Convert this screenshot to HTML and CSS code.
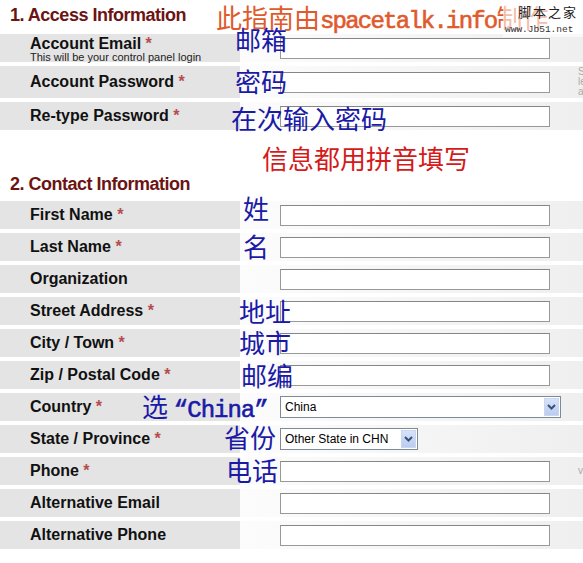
FILE: index.html
```html
<!DOCTYPE html>
<html lang="zh-CN">
<head>
    <meta charset="UTF-8">
    <meta name="viewport" content="width=device-width, initial-scale=1.0">
    <title>Signup - Access and Contact Information</title>
    <link rel="stylesheet" href="styles.css">
</head>
<body>
    <!-- watermark -->
    <div class="watermark">
        <div class="wm-name">脚本之家</div>
        <div class="wm-url">www.Jb51.net</div>
    </div>

    <!-- 1. Access -->
    <h2 class="section-title first">
        1. Access Information
        <span class="note note-orange">此指南由<span class="latin">spacetalk.info</span>制作</span>
    </h2>

    <div class="row row-email">
        <div class="label">
            <span>Account Email <span class="req">*</span></span>
            <small class="hint">This will be your control panel login</small>
        </div>
        <div class="field"><input type="text"></div>
        <span class="note n-email">邮箱</span>
    </div>
    <div class="row row-pass">
        <div class="label"><span>Account Password <span class="req">*</span></span></div>
        <div class="field">
            <input type="password">
            <div class="side">Six<br>letters<br>and</div>
        </div>
        <span class="note n-pass">密码</span>
    </div>
    <div class="row">
        <div class="label"><span>Re-type Password <span class="req">*</span></span></div>
        <div class="field"><input type="password"></div>
        <span class="note n-retype">在次输入密码</span>
    </div>

    <!-- 2. Contact -->
    <h2 class="section-title second">
        2. Contact Information
        <span class="note note-red">信息都用拼音填写</span>
    </h2>

    <div class="row">
        <div class="label"><span>First Name <span class="req">*</span></span></div>
        <div class="field"><input type="text"></div>
        <span class="note n-first">姓</span>
    </div>
    <div class="row">
        <div class="label"><span>Last Name <span class="req">*</span></span></div>
        <div class="field"><input type="text"></div>
        <span class="note n-last">名</span>
    </div>
    <div class="row">
        <div class="label"><span>Organization</span></div>
        <div class="field"><input type="text"></div>
    </div>
    <div class="row">
        <div class="label"><span>Street Address <span class="req">*</span></span></div>
        <div class="field"><input type="text"></div>
        <span class="note n-street">地址</span>
    </div>
    <div class="row">
        <div class="label"><span>City / Town <span class="req">*</span></span></div>
        <div class="field"><input type="text"></div>
        <span class="note n-city">城市</span>
    </div>
    <div class="row">
        <div class="label"><span>Zip / Postal Code <span class="req">*</span></span></div>
        <div class="field"><input type="text"></div>
        <span class="note n-zip">邮编</span>
    </div>
    <div class="row">
        <div class="label"><span>Country <span class="req">*</span></span></div>
        <div class="field">
            <div class="select select-country">
                <span>China</span>
                <span class="arrow"><svg width="9" height="6" viewBox="0 0 9 6"><path d="M1 1 L4.5 4.5 L8 1" fill="none" stroke="#3c4f74" stroke-width="2"/></svg></span>
            </div>
        </div>
        <span class="note n-country">选 <span class="latin">“China”</span></span>
    </div>
    <div class="row">
        <div class="label"><span>State / Province <span class="req">*</span></span></div>
        <div class="field">
            <div class="select select-state">
                <span>Other State in CHN</span>
                <span class="arrow"><svg width="9" height="6" viewBox="0 0 9 6"><path d="M1 1 L4.5 4.5 L8 1" fill="none" stroke="#3c4f74" stroke-width="2"/></svg></span>
            </div>
        </div>
        <span class="note n-state">省份</span>
    </div>
    <div class="row">
        <div class="label"><span>Phone <span class="req">*</span></span></div>
        <div class="field">
            <input type="text">
            <div class="side">v</div>
        </div>
        <span class="note n-phone">电话</span>
    </div>
    <div class="row">
        <div class="label"><span>Alternative Email</span></div>
        <div class="field"><input type="text"></div>
    </div>
    <div class="row">
        <div class="label"><span>Alternative Phone</span></div>
        <div class="field"><input type="text"></div>
    </div>
</body>
</html>
```

FILE: styles.css
```css
body {
    margin: 0;
    overflow: hidden;
    background: #fff;
    font-family: "Liberation Sans", Arial, sans-serif;
    color: #111;
}

.section-title {
    position: relative;
    margin: 0;
    padding-left: 10px;
    font-size: 18px;
    line-height: 30px;
    letter-spacing: -0.5px;
    color: #6c1414;
}

.section-title.first {
    margin-bottom: 4px;
}

.section-title.second {
    margin-top: 39px;
    margin-bottom: 2px;
}

/* form rows */
.row {
    position: relative;
    display: flex;
    height: 28px;
    margin-bottom: 4px;
}

.row-pass {
    height: 32px;
}

.label {
    flex: 0 0 210px;
    padding-left: 30px;
    background: #e4e4e4;
    display: flex;
    flex-direction: column;
    justify-content: center;
    font-size: 16px;
    font-weight: bold;
    line-height: 16px;
}

.row-email .label {
    justify-content: flex-start;
    padding-top: 2px;
}

.hint {
    font-size: 11px;
    font-weight: normal;
    line-height: 10px;
    color: #222;
}

.req {
    color: #b44c4c;
}

.field {
    flex: 1;
    min-width: 0;
    overflow: hidden;
    display: flex;
    align-items: center;
    padding-left: 40px;
    background: linear-gradient(to right, #fcfcfc, #efefef);
}

.field input {
    flex: 0 0 270px;
    width: 270px;
    height: 21px;
    box-sizing: border-box;
    margin: 0;
    border: 1px solid #999;
    border-top-color: #868686;
    background: #fff;
}

.side {
    flex: 0 0 auto;
    margin-left: 28px;
    font-size: 10px;
    line-height: 10px;
    color: #aaa;
}

/* fake select boxes */
.select {
    flex: 0 0 auto;
    height: 22px;
    box-sizing: border-box;
    border: 1px solid #7f8a96;
    background: #fff;
    display: flex;
    align-items: center;
    justify-content: space-between;
    padding-left: 4px;
    font-size: 12px;
    color: #000;
}

.select-country {
    width: 281px;
}

.select-state {
    width: 138px;
}

.arrow {
    width: 15px;
    height: 18px;
    margin-right: 1px;
    display: flex;
    align-items: center;
    justify-content: center;
    background: linear-gradient(#d6e2f8, #b9cdf0);
    border: 1px solid #c9d6ee;
    box-sizing: border-box;
}

/* overlaid chinese notes */
.note {
    position: absolute;
    font-family: "Noto Sans CJK SC", sans-serif;
    font-size: 26px;
    font-weight: normal;
    line-height: 1;
    letter-spacing: 0;
    color: #1a1aa6;
    white-space: nowrap;
}

.note .latin {
    font-family: "Liberation Mono", "Noto Sans CJK SC", monospace;
    font-size: 24px;
    letter-spacing: -1.8px;
    -webkit-text-stroke: 0.6px currentColor;
}

.n-country .latin {
    letter-spacing: -1px;
}

.note-orange {
    left: 216px;
    top: 4px;
    color: #e05a2c;
}

.note-red {
    left: 262px;
    top: -24px;
    color: #d41a1a;
}

.n-email { left: 235px; top: -8px; }
.n-pass { left: 235px; top: 2px; }
.n-retype { left: 231px; top: 3px; }
.n-first { left: 243px; top: -6px; }
.n-last { left: 243px; top: 0; }
.n-street { left: 239px; top: 1px; }
.n-city { left: 239px; top: 0; }
.n-zip { left: 241px; top: 1px; }
.n-country { left: 142px; top: 0; }
.n-state { left: 224px; top: -1px; }
.n-phone { left: 226px; top: 0; }

.watermark {
    position: absolute;
    top: 0;
    right: 0;
    width: 80px;
    height: 37px;
    background: rgba(255, 255, 255, 0.6);
    z-index: 2;
}

.wm-name {
    margin: 4px 0 0 15px;
    font-family: "Noto Sans CJK SC", sans-serif;
    font-size: 13px;
    line-height: 15px;
    letter-spacing: 2px;
    color: #222;
}

.wm-url {
    margin: 6px 0 0 2px;
    font-family: "Liberation Mono", monospace;
    font-size: 9.5px;
    line-height: 10px;
    color: #333;
}
```
